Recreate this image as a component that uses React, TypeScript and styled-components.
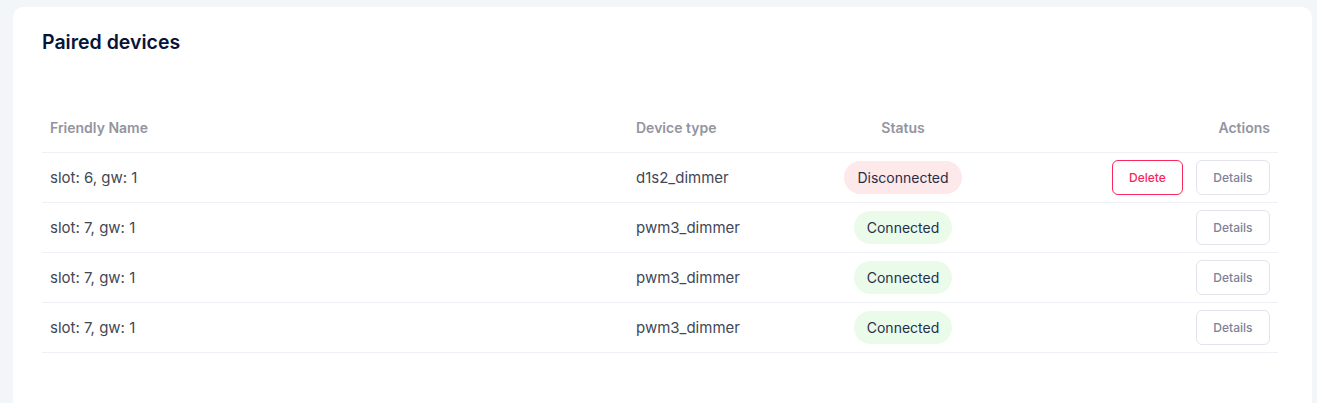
import React from "react";
import styled, { createGlobalStyle } from "styled-components";

const Global = createGlobalStyle`
  html, body { margin: 0; padding: 0; background: #f3f6f9; }
  body { font-family: Inter, "Noto Sans", sans-serif; -webkit-font-smoothing: antialiased; }
`;

const Page = styled.div`
  padding: 7px 5px 0 13px;
  height: 403px;
  box-sizing: border-box;
  overflow: hidden;
`;

const Card = styled.section`
  background: #ffffff;
  border-radius: 10px;
  padding: 21px 34px 40px 29px;
  min-height: 420px;
  box-sizing: border-box;
`;

const Title = styled.h2`
  margin: 0 0 47px 0;
  font-size: 19.5px;
  line-height: 28px;
  font-weight: 600;
  color: #071437;
`;

const Table = styled.table`
  width: 100%;
  border-collapse: collapse;
  table-layout: fixed;
`;

const Th = styled.th<{ $align?: string }>`
  text-align: ${(p) => p.$align || "left"};
  font-size: 14px;
  font-weight: 600;
  color: #92959f;
  padding: 0 8px;
  height: 49px;
  border-bottom: 1px solid #eef0f6;
`;

const Td = styled.td<{ $align?: string }>`
  text-align: ${(p) => p.$align || "left"};
  font-size: 15px;
  color: #434756;
  padding: 0 8px;
  height: 49px;
  border-bottom: 1px solid #eef0f6;
`;

const Badge = styled.span<{ $ok: boolean }>`
  display: inline-block;
  padding: 8px 13px 7px;
  border-radius: 17px;
  font-size: 14px;
  line-height: 18px;
  color: #252f4a;
  background: ${(p) => (p.$ok ? "#eafbea" : "#fde8ea")};
`;

const Actions = styled.div`
  display: flex;
  justify-content: flex-end;
  align-items: center;
  gap: 13px;
`;

const Button = styled.button<{ $danger?: boolean }>`
  font-family: inherit;
  font-size: 12px;
  font-weight: 500;
  line-height: 17px;
  padding: 8px ${(p) => (p.$danger ? "16px" : "16.5px")};
  border-radius: 6px;
  background: #ffffff;
  border: 1px solid ${(p) => (p.$danger ? "#f8285a" : "#e3e3ec")};
  color: ${(p) => (p.$danger ? "#f8285a" : "#7e8299")};
  cursor: pointer;
`;

const rows = [
  { name: "slot: 6, gw: 1", type: "d1s2_dimmer", ok: false },
  { name: "slot: 7, gw: 1", type: "pwm3_dimmer", ok: true },
  { name: "slot: 7, gw: 1", type: "pwm3_dimmer", ok: true },
  { name: "slot: 7, gw: 1", type: "pwm3_dimmer", ok: true },
];

export default function App() {
  return (
    <>
      <Global />
      <Page>
        <Card>
          <Title>Paired devices</Title>
          <Table>
            <colgroup>
              <col style={{ width: 586 }} />
              <col style={{ width: 172 }} />
              <col style={{ width: 206 }} />
              <col style={{ width: 272 }} />
            </colgroup>
            <thead>
              <tr>
                <Th>Friendly Name</Th>
                <Th>Device type</Th>
                <Th $align="center">Status</Th>
                <Th $align="right">Actions</Th>
              </tr>
            </thead>
            <tbody>
              {rows.map((r, i) => (
                <tr key={i}>
                  <Td>{r.name}</Td>
                  <Td>{r.type}</Td>
                  <Td $align="center">
                    <Badge $ok={r.ok}>{r.ok ? "Connected" : "Disconnected"}</Badge>
                  </Td>
                  <Td $align="right">
                    <Actions>
                      {!r.ok && <Button $danger>Delete</Button>}
                      <Button>Details</Button>
                    </Actions>
                  </Td>
                </tr>
              ))}
            </tbody>
          </Table>
        </Card>
      </Page>
    </>
  );
}
